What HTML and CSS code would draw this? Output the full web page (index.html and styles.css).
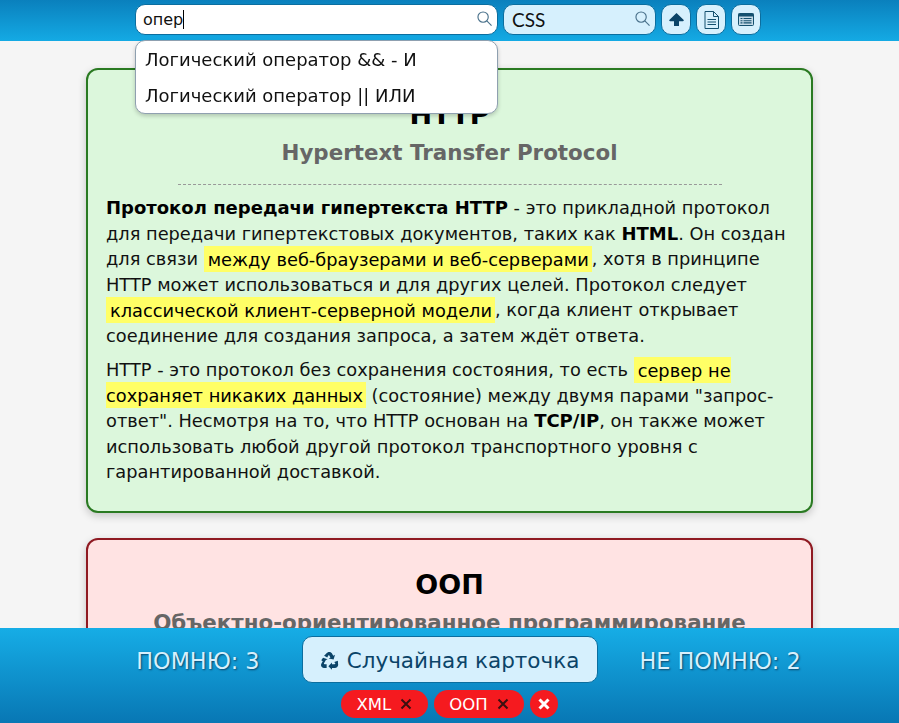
FILE: index.html
```html
<!DOCTYPE html>
<html lang="ru">
<head>
    <meta charset="UTF-8">
    <meta name="viewport" content="width=device-width, initial-scale=1.0">
    <title>Карточки</title>
    <link rel="stylesheet" href="styles.css">
</head>
<body>
    <header class="topbar">
        <div class="search search-main">
            <span class="search-text">опер<span class="caret"></span></span>
            <svg class="search-icon" viewBox="0 0 16 16"><circle cx="6.5" cy="6.5" r="5.5"/><path d="M10.5 10.5 L15.5 15.5"/></svg>
            <ul class="suggest">
                <li>Логический оператор &amp;&amp; - И</li>
                <li>Логический оператор || ИЛИ</li>
            </ul>
        </div>
        <div class="search search-cat">
            <span class="search-text cat-text">CSS</span>
            <svg class="search-icon" viewBox="0 0 16 16"><circle cx="6.5" cy="6.5" r="5.5"/><path d="M10.5 10.5 L15.5 15.5"/></svg>
        </div>
        <button class="tool-btn">
            <svg viewBox="0 0 15 13" width="15" height="13"><path fill="#0b4468" d="M7.5 0 L15 7.2 L14 8.2 L10 8.2 L10 13 L5 13 L5 8.2 L1 8.2 L0 7.2 Z"/></svg>
        </button>
        <button class="tool-btn">
            <svg viewBox="0 0 15 18" width="15" height="18" fill="none" stroke="#14506f" stroke-width="1"><path d="M1 .5 H9.5 L14.5 5.5 V17.5 H1 Z"/><path d="M9.5 .5 V5.5 H14.5"/><path d="M3.5 8.5 H12 M3.5 11 H12 M3.5 13.5 H12"/></svg>
        </button>
        <button class="tool-btn">
            <svg viewBox="0 0 16 13" width="16" height="13"><rect x="0.5" y="0.5" width="15" height="12" rx="1" fill="#c5dbe8" stroke="#14506f"/><rect x="0.5" y="0.5" width="15" height="3" fill="#14506f"/><path d="M2.5 5.5 H4.5 M5.5 5.5 H13.5 M2.5 7.7 H4.5 M5.5 7.7 H13.5 M2.5 9.9 H4.5 M5.5 9.9 H13.5" stroke="#14506f" stroke-width="1.1"/></svg>
        </button>
    </header>

    <main class="cards">
        <section class="card card-green">
            <h2 class="card-title">HTTP</h2>
            <h3 class="card-sub">Hypertext Transfer Protocol</h3>
            <hr class="card-line">
            <p><b>Протокол передачи гипертекста HTTP</b> - это прикладной протокол для передачи гипертекстовых документов, таких как <b>HTML</b>. Он создан для связи <mark>между веб-браузерами и веб-серверами</mark>, хотя в принципе HTTP может использоваться и для других целей. Протокол следует <mark>классической клиент-серверной модели</mark>, когда клиент открывает соединение для создания запроса, а затем ждёт ответа.</p>
            <p>HTTP - это протокол без сохранения состояния, то есть <mark>сервер не сохраняет никаких данных</mark> (состояние) между двумя парами "запрос-ответ". Несмотря на то, что HTTP основан на <b>TCP/IP</b>, он также может использовать любой другой протокол транспортного уровня с гарантированной доставкой.</p>
        </section>
        <section class="card card-red">
            <h2 class="card-title">ООП</h2>
            <h3 class="card-sub">Объектно-ориентированное программирование</h3>
        </section>
    </main>

    <footer class="bottombar">
        <div class="bottom-row">
            <span class="counter counter-left">ПОМНЮ: 3</span>
            <button class="random-btn">
                <svg viewBox="0 0 20 20" width="19" height="19" fill="#0b4468"><path d="M7.2 2.2 C8.3 0.6 11.2 0.6 12.3 2.2 L14 5 L15.8 4 L14.3 9 L9.2 7.9 L11 6.9 L9.6 4.6 C9.4 4.3 9.1 4.3 8.9 4.6 L7.6 6.8 L4.3 4.9 Z"/><path d="M3.2 7 L8 8.6 L6.2 9.6 L4.2 13 C4 13.5 4.3 14 4.8 14 L7 14 L7 17.8 L4 17.8 C1.9 17.8 0.4 15.4 1.4 13.4 L2.9 10.7 L1.3 9.8 Z"/><path d="M18.8 10.3 L19 13.4 C19.6 15.6 18 17.8 16 17.8 L12.6 17.8 L12.6 19.8 L8.8 16 L12.6 12.2 L12.6 14 L15.4 14 C15.9 14 16.2 13.5 16 13 L15 11.6 Z"/></svg>
                Случайная карточка
            </button>
            <span class="counter counter-right">НЕ ПОМНЮ: 2</span>
        </div>
        <div class="tags">
            <span class="tag">XML <svg class="tag-x" viewBox="0 0 12 12"><path d="M1.5 1.5 L10.5 10.5 M10.5 1.5 L1.5 10.5"/></svg></span>
            <span class="tag">ООП <svg class="tag-x" viewBox="0 0 12 12"><path d="M1.5 1.5 L10.5 10.5 M10.5 1.5 L1.5 10.5"/></svg></span>
            <span class="tag tag-clear"><svg class="tag-x" viewBox="0 0 12 12"><path d="M1.5 1.5 L10.5 10.5 M10.5 1.5 L1.5 10.5"/></svg></span>
        </div>
    </footer>
</body>
</html>
```

FILE: styles.css
```css
html, body {
    height: 100%;
    overflow: hidden;
}
body {
    margin: 0;
    background: #f5f5f5;
    color: #000;
    font-family: "DejaVu Sans", Verdana, sans-serif;
}

/* top bar */
.topbar {
    position: fixed;
    top: 0;
    left: 0;
    right: 0;
    height: 41px;
    z-index: 5;
    display: flex;
    justify-content: center;
    align-items: flex-start;
    gap: 5px;
    padding: 4px 3px 0 0;
    box-sizing: border-box;
    background: linear-gradient(to bottom, #0a80bd, #14aae4);
}
.search {
    position: relative;
    height: 31px;
    box-sizing: border-box;
    border: 1px solid #0b6e9f;
    border-radius: 10px;
    display: flex;
    align-items: center;
    padding: 0 5px 0 7px;
}
.search-main {
    width: 363px;
    background: #fff;
}
.search-cat {
    width: 153px;
    background: #d6f0fd;
}
.search-text {
    font-size: 16px;
    flex: 1;
    color: #111;
}
.cat-text {
    font-family: "Lato", sans-serif;
    font-size: 19px;
    padding-left: 1px;
}
.caret {
    display: inline-block;
    width: 1px;
    height: 19px;
    background: #000;
    vertical-align: -4px;
}
.search-icon {
    width: 15px;
    height: 15px;
    margin-top: -3px;
    fill: none;
    stroke: #48708a;
    stroke-width: 1.2;
}
.suggest {
    position: absolute;
    top: 35px;
    left: -1px;
    right: -1px;
    margin: 0;
    padding: 1px 0 0;
    list-style: none;
    background: #fff;
    border: 1px solid #8fa0b0;
    border-radius: 10px;
    box-shadow: 0 2px 4px rgba(0, 0, 0, 0.2);
}
.suggest li {
    height: 35.5px;
    line-height: 36px;
    padding-left: 9px;
    font-size: 18px;
    color: #111;
}
.tool-btn {
    width: 30px;
    height: 31px;
    padding: 0;
    border: 1px solid #0b6e9f;
    border-radius: 10px;
    background: #d6f0fd;
    display: flex;
    align-items: center;
    justify-content: center;
}

/* cards */
.cards {
    width: 727px;
    margin: 0 auto;
    padding-top: 68px;
}
.card {
    box-sizing: border-box;
    border: 2px solid;
    border-radius: 12px;
    padding: 27px 18px 17px;
    margin-bottom: 25px;
    box-shadow: 0 3px 8px rgba(0, 0, 0, 0.2);
}
.card-green {
    border-color: #2a7a22;
    background: #dcf7dc;
}
.card-red {
    border-color: #8f1a22;
    background: #ffe3e3;
}
.card-title {
    margin: 0;
    text-align: center;
    font-size: 27px;
    line-height: 36px;
}
.card-sub {
    margin: 4px 0 0;
    text-align: center;
    font-size: 21.4px;
    line-height: 32px;
    color: #666;
}
.card-line {
    width: 544px;
    margin: 15px auto 10px;
    border: none;
    border-top: 1px dashed #999;
}
.card p {
    margin: 0 0 9px;
    font-size: 17.8px;
    line-height: 25.5px;
    color: #111;
}
.card b {
    font-size: 18px;
    line-height: 1;
    color: #000;
}
mark {
    background: #ffff66;
    padding: 2.5px 3px 2.5px 4px;
}

/* bottom bar */
.bottombar {
    position: fixed;
    left: 0;
    right: 0;
    bottom: 0;
    height: 95px;
    z-index: 4;
    box-sizing: border-box;
    padding-top: 8px;
    background: linear-gradient(to bottom, #16ade6, #0877b4);
}
.bottom-row {
    display: grid;
    grid-template-columns: 1fr 296px 1fr;
    align-items: center;
    column-gap: 42px;
}
.counter {
    font-size: 22.3px;
    padding-top: 2px;
    color: #d6f0fd;
    text-shadow: 1px 1px 2px #0b4468;
}
.counter-left {
    justify-self: end;
}
.counter-right {
    justify-self: start;
}
.random-btn {
    height: 47px;
    box-sizing: border-box;
    padding: 2px 0 0;
    border: 1px solid #0b6e9f;
    border-radius: 10px;
    background: #d6f0fd;
    color: #0b4468;
    font-family: inherit;
    font-size: 21.5px;
    display: flex;
    align-items: center;
    justify-content: center;
    gap: 8px;
}
.tags {
    display: flex;
    justify-content: center;
    gap: 6px;
    margin-top: 7px;
}
.tag {
    height: 28px;
    padding: 0 15.5px;
    box-sizing: border-box;
    display: flex;
    align-items: center;
    gap: 9px;
    border-radius: 14px;
    background: #f51a1f;
    color: #fff;
    font-size: 16.5px;
}
.tag-x {
    width: 12px;
    height: 12px;
    fill: none;
    stroke: #3a1010;
    stroke-width: 2;
}
.tag-clear {
    width: 28px;
    padding: 0;
    justify-content: center;
}
.tag-clear .tag-x {
    stroke: #fff;
    stroke-width: 3;
}
```
